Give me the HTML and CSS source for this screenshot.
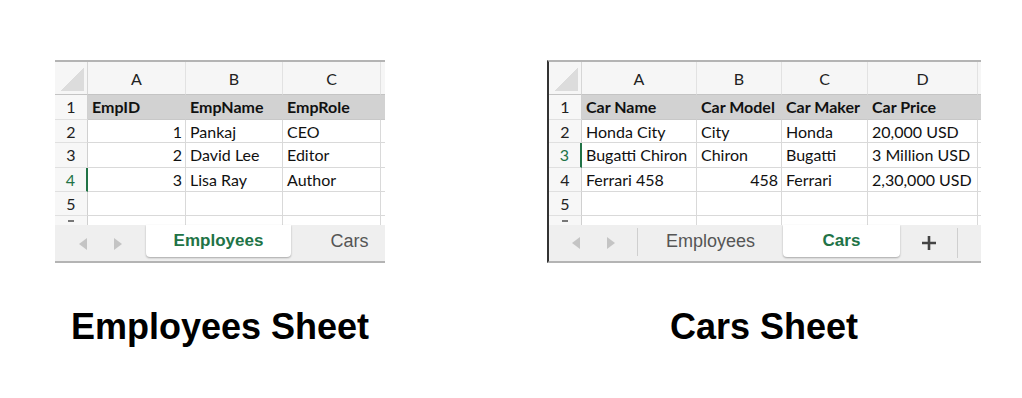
FILE: index.html
```html
<html>
<head>
  <title>Employees and Cars sheets</title>
  <link rel="stylesheet" href="styles.css">
</head>
<body>
  <div class="page">
    <div class="figure">
      <div class="sheet employees">
        <div class="grid">
          <div class="corner"></div>
          <div class="colhead">A</div>
          <div class="colhead">B</div>
          <div class="colhead">C</div>
          <div class="colhead rest"></div>

          <div class="rownum">1</div>
          <div class="cell head">EmpID</div>
          <div class="cell head">EmpName</div>
          <div class="cell head">EmpRole</div>
          <div class="cell head rest"></div>

          <div class="rownum">2</div>
          <div class="cell num">1</div>
          <div class="cell">Pankaj</div>
          <div class="cell">CEO</div>
          <div class="cell rest"></div>

          <div class="rownum">3</div>
          <div class="cell num">2</div>
          <div class="cell">David Lee</div>
          <div class="cell">Editor</div>
          <div class="cell rest"></div>

          <div class="rownum selected">4</div>
          <div class="cell num">3</div>
          <div class="cell">Lisa Ray</div>
          <div class="cell">Author</div>
          <div class="cell rest"></div>

          <div class="rownum">5</div>
          <div class="cell"></div>
          <div class="cell"></div>
          <div class="cell"></div>
          <div class="cell rest"></div>

          <div class="rownum cut"><span class="peek"></span></div>
          <div class="cell cut"></div>
          <div class="cell cut"></div>
          <div class="cell cut"></div>
          <div class="cell cut rest"></div>
        </div>
        <div class="tabs">
          <div class="arrows">
            <svg width="10" height="12" viewBox="0 0 10 12"><polygon points="9,0 9,12 1,6" fill="#c4c4c4"/></svg>
            <svg width="10" height="12" viewBox="0 0 10 12"><polygon points="1,0 1,12 9,6" fill="#c4c4c4"/></svg>
          </div>
          <div class="tab active wide">Employees</div>
          <div class="tab narrow">Cars</div>
        </div>
      </div>
      <div class="caption">Employees Sheet</div>
    </div>

    <div class="figure">
      <div class="sheet cars">
        <div class="grid">
          <div class="corner"></div>
          <div class="colhead">A</div>
          <div class="colhead">B</div>
          <div class="colhead">C</div>
          <div class="colhead">D</div>
          <div class="colhead rest"></div>

          <div class="rownum">1</div>
          <div class="cell head">Car Name</div>
          <div class="cell head">Car Model</div>
          <div class="cell head">Car Maker</div>
          <div class="cell head">Car Price</div>
          <div class="cell head rest"></div>

          <div class="rownum">2</div>
          <div class="cell">Honda City</div>
          <div class="cell">City</div>
          <div class="cell">Honda</div>
          <div class="cell">20,000 USD</div>
          <div class="cell rest"></div>

          <div class="rownum selected">3</div>
          <div class="cell">Bugatti Chiron</div>
          <div class="cell">Chiron</div>
          <div class="cell">Bugatti</div>
          <div class="cell">3 Million USD</div>
          <div class="cell rest"></div>

          <div class="rownum">4</div>
          <div class="cell">Ferrari 458</div>
          <div class="cell num">458</div>
          <div class="cell">Ferrari</div>
          <div class="cell">2,30,000 USD</div>
          <div class="cell rest"></div>

          <div class="rownum">5</div>
          <div class="cell"></div>
          <div class="cell"></div>
          <div class="cell"></div>
          <div class="cell"></div>
          <div class="cell rest"></div>

          <div class="rownum cut"><span class="peek"></span></div>
          <div class="cell cut"></div>
          <div class="cell cut"></div>
          <div class="cell cut"></div>
          <div class="cell cut"></div>
          <div class="cell cut rest"></div>
        </div>
        <div class="tabs">
          <div class="arrows split">
            <svg width="10" height="12" viewBox="0 0 10 12"><polygon points="9,0 9,12 1,6" fill="#c4c4c4"/></svg>
            <svg width="10" height="12" viewBox="0 0 10 12"><polygon points="1,0 1,12 9,6" fill="#c4c4c4"/></svg>
          </div>
          <div class="tab wide">Employees</div>
          <div class="tab active narrow">Cars</div>
          <div class="tab add">
            <svg width="18" height="18" viewBox="0 0 18 18"><path d="M9 2v14M2 9h14" stroke="#444" stroke-width="2.6"/></svg>
          </div>
        </div>
      </div>
      <div class="caption">Cars Sheet</div>
    </div>
  </div>
</body>
</html>
```

FILE: styles.css
```css
body {
  margin: 0;
  background: #fff;
}
.page {
  display: flex;
  padding: 60px 0 0 55px;
  gap: 162px;
}
.figure {
  display: flex;
  flex-direction: column;
}
.sheet {
  border-top: 2px solid #b4b4b4;
  border-bottom: 2px solid #b4b4b4;
  overflow: hidden;
  font-family: "Lato", sans-serif;
  font-size: 16px;
  color: #111;
}
.employees {
  width: 330px;
}
.cars {
  width: 432px;
  border-left: 2px solid #333;
}
.grid {
  display: grid;
  grid-template-rows: 33px 25px 23px 25px 24px 24px 9px;
}
.employees .grid {
  grid-template-columns: 33px 98px 97px 98px 1fr;
}
.cars .grid {
  grid-template-columns: 33px 115px 85px 86px 110px 1fr;
}
.corner {
  position: relative;
  background: #f6f6f6;
  border-right: 1px solid #d6d6d6;
  border-bottom: 1px solid #c4c4c4;
}
.corner::after {
  content: "";
  position: absolute;
  left: 6px;
  top: 5px;
  right: 3px;
  bottom: 3px;
  background: linear-gradient(to bottom right, transparent 50%, #dcdcdc 50%);
}
.colhead {
  background: #f6f6f6;
  border-right: 1px solid #e2e2e2;
  border-bottom: 1px solid #c4c4c4;
  text-align: center;
  line-height: 33px;
  color: #222;
}
.rownum {
  background: #f7f7f7;
  border-right: 1px solid #d0d0d0;
  border-bottom: 1px solid #e0e0e0;
  text-align: center;
  line-height: 24px;
  color: #222;
}
.rownum.selected {
  color: #217346;
  border-right: 2px solid #217346;
}
.peek {
  display: inline-block;
  width: 6px;
  height: 2px;
  margin-top: 4px;
  vertical-align: top;
  background: #777;
}
.cell {
  border-right: 1px solid #d9d9d9;
  border-bottom: 1px solid #d9d9d9;
  padding: 0 4px;
  line-height: 24px;
  white-space: nowrap;
  overflow: hidden;
}
.cell.head {
  background: #d2d2d2;
  font-weight: 700;
  border-right-color: #d2d2d2;
  border-bottom-color: #c8c8c8;
}
.cell.num {
  text-align: right;
  padding-right: 3px;
}
.rest {
  border-right: none;
}
.cut {
  overflow: hidden;
  border-bottom: none;
  line-height: 9px;
}
.tabs {
  display: flex;
  height: 36px;
  background: #efefef;
  font-family: "Liberation Sans", Arial, sans-serif;
}
.arrows {
  width: 91px;
  flex: none;
  display: flex;
  align-items: center;
  justify-content: center;
  gap: 25px;
  padding-top: 2px;
  box-sizing: border-box;
}
.arrows.split {
  width: 89px;
  border-right: 1px solid #cfcfcf;
  margin: 3px 0 5px;
}
.tab {
  flex: none;
  height: 32px;
  line-height: 32px;
  text-align: center;
  font-size: 18px;
  color: #555;
}
.tab.wide {
  width: 145px;
}
.tab.narrow {
  width: 117px;
}
.tab.active {
  background: #fff;
  color: #217346;
  font-weight: 700;
  font-size: 17px;
  border-radius: 0 0 4px 4px;
  box-shadow: 0 1px 2px rgba(0, 0, 0, 0.3);
}
.tab.add {
  width: 57px;
  display: flex;
  align-items: center;
  justify-content: center;
  height: 30px;
  margin-top: 3px;
  border-right: 1px solid #cfcfcf;
}
.caption {
  margin-top: 46px;
  font-family: "Liberation Sans", Arial, sans-serif;
  font-weight: 700;
  font-size: 36px;
  line-height: 36px;
  text-align: center;
  color: #000;
}
```
